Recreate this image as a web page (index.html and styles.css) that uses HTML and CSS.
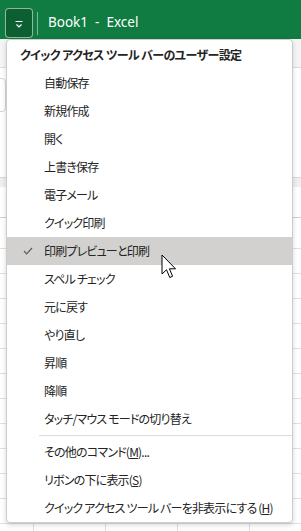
FILE: index.html
```html
<!DOCTYPE html>
<html>
<head>
    <title>Book1 - Excel</title>
    <link rel="stylesheet" href="styles.css">
</head>
<body>
    <div class="titlebar">
        <div class="qat-button">
            <svg width="10" height="8" viewBox="0 0 10 8">
                <line x1="1.5" y1="0.5" x2="8.5" y2="0.5" stroke="#fff" stroke-width="1"/>
                <polyline points="2.5,3.5 5,6 7.5,3.5" fill="none" stroke="#fff" stroke-width="1.2"/>
            </svg>
        </div>
        <div class="title-sep"></div>
        <div class="title">Book1&nbsp;&nbsp;-&nbsp;&nbsp;Excel</div>
    </div>

    <div class="sheet">
        <div class="ribbon"></div>
        <div class="formula-area"><div class="name-box"></div></div>
        <div class="colhead"></div>
        <div class="firstrow"></div>
        <div class="grid"></div>
    </div>

    <div class="menu">
        <div class="menu-title">クイック アクセス ツール バーのユーザー設定</div>
        <div class="menu-item">自動保存</div>
        <div class="menu-item">新規作成</div>
        <div class="menu-item">開く</div>
        <div class="menu-item">上書き保存</div>
        <div class="menu-item">電子メール</div>
        <div class="menu-item">クイック印刷</div>
        <div class="menu-item hover">
            <svg class="check" width="10" height="8" viewBox="0 0 10 8">
                <polyline points="1,4 3.6,6.8 9,1" fill="none" stroke="#5c5c5c" stroke-width="1.2"/>
            </svg>
            印刷プレビューと印刷
        </div>
        <div class="menu-item">スペル チェック</div>
        <div class="menu-item">元に戻す</div>
        <div class="menu-item">やり直し</div>
        <div class="menu-item">昇順</div>
        <div class="menu-item">降順</div>
        <div class="menu-item">タッチ/マウス モードの切り替え</div>
        <div class="menu-sep"></div>
        <div class="menu-item">その他のコマンド(<u>M</u>)...</div>
        <div class="menu-item">リボンの下に表示(<u>S</u>)</div>
        <div class="menu-item">クイック アクセス ツール バーを非表示にする (<u>H</u>)</div>
    </div>

    <svg class="cursor" width="16" height="26" viewBox="0 0 16 26">
        <path d="M1 1 L1 20 L5.5 15.8 L8.8 23.5 L11.6 22.3 L8.4 14.8 L14.5 14.8 Z" fill="#fff" stroke="#000" stroke-width="1" stroke-linejoin="round"/>
    </svg>
</body>
</html>
```

FILE: styles.css
```css
body {
    margin: 0;
    width: 301px;
    height: 531px;
    overflow: hidden;
    background-color: #fff;
    font-family: "Noto Sans CJK JP", "Noto Sans", sans-serif;
    color: #242424;
}
.titlebar {
    height: 39px;
    background-color: #107c41;
    display: flex;
    align-items: flex-start;
}
.qat-button {
    margin: 8px 0 0 5px;
    width: 28px;
    height: 30px;
    box-sizing: border-box;
    border: 1px solid rgba(255, 255, 255, 0.55);
    border-radius: 4px;
    background-color: #0c5f31;
    display: flex;
    justify-content: center;
    padding-top: 12px;
}
.title-sep {
    width: 1px;
    height: 23px;
    margin: 12px 0 0 4px;
    background-color: rgba(255, 255, 255, 0.45);
}
.title {
    margin: 12px 0 0 10px;
    font-family: "Noto Sans", sans-serif;
    font-size: 13.5px;
    line-height: 20px;
    color: #fff;
}
.sheet {
    display: flex;
    flex-direction: column;
}
.ribbon {
    height: 28px;
    background-color: #f5f5f5;
    border-bottom: 1px solid #dcdcdc;
}
.formula-area {
    height: 109px;
    overflow: hidden;
}
.name-box {
    width: 30px;
    height: 32px;
    margin: 10px 0 0 -26px;
    border: 1px solid #d6d6d6;
    border-radius: 4px;
}
.colhead {
    height: 9px;
    background-color: #efefef;
    border-top: 1px solid #d8d8d8;
}
.firstrow {
    height: 30px;
    border-bottom: 1px solid #cfcfcf;
}
.grid {
    height: 320px;
    background-image:
        repeating-linear-gradient(to right, transparent 0 71px, #e0e0e0 71px 72px),
        repeating-linear-gradient(to bottom, transparent 0 24px, #e0e0e0 24px 25px);
    background-position: -38px 0, 0 6px;
}
.menu {
    position: absolute;
    top: 39px;
    left: 6px;
    width: 287px;
    box-sizing: border-box;
    background-color: #fff;
    border: 1px solid #cdcdcd;
    border-radius: 4px;
    box-shadow: 0 2px 5px rgba(0, 0, 0, 0.16);
    font-size: 12px;
    font-feature-settings: "palt";
    letter-spacing: -0.8px;
}
.menu-title {
    height: 29px;
    line-height: 29px;
    padding-left: 13px;
    font-weight: bold;
    letter-spacing: -0.6px;
}
.menu-item {
    position: relative;
    height: 28px;
    line-height: 28px;
    padding-left: 37px;
    white-space: nowrap;
}
.menu-item.hover {
    background-color: #d2d1cf;
}
.check {
    position: absolute;
    left: 16px;
    top: 10px;
}
.menu-sep {
    height: 1px;
    margin: 2px 0 2px 32px;
    background-color: #dcdcdc;
}
.cursor {
    position: absolute;
    left: 161px;
    top: 254px;
}
```
